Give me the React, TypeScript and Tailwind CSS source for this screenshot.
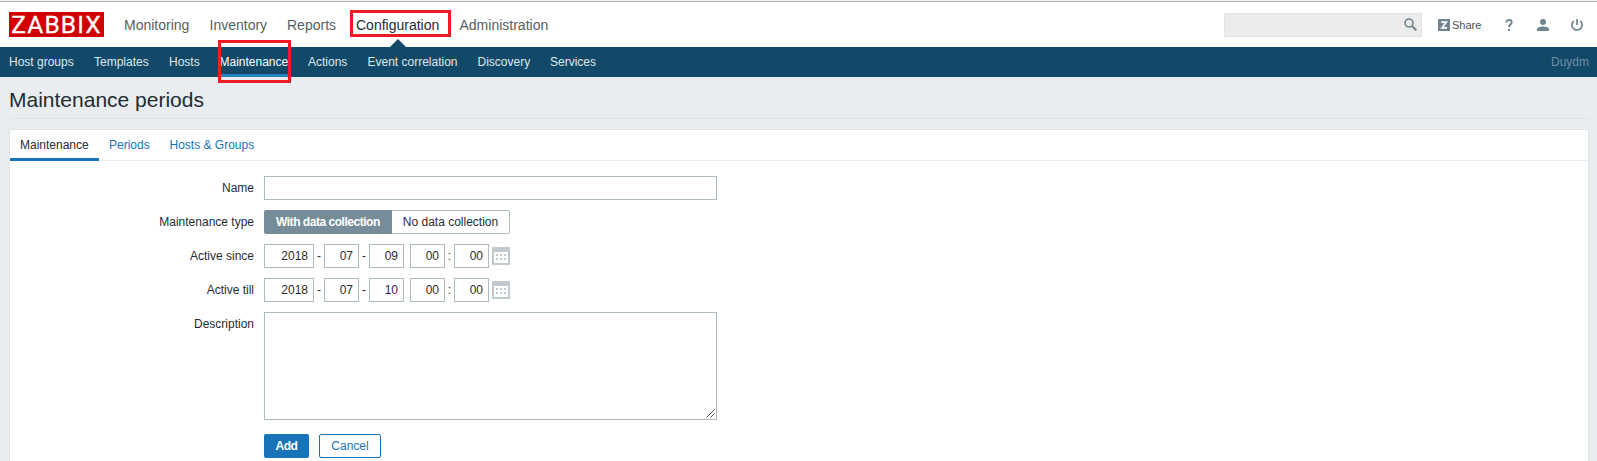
import React from "react";

const mainMenu = [
  { label: "Monitoring", w: "w-[85.5px]" },
  { label: "Inventory", w: "w-[77.5px]" },
  { label: "Reports", w: "w-[69px]" },
  { label: "Configuration", w: "w-[103.5px]", active: true },
  { label: "Administration", w: "w-[90px]" },
];

const subMenu = [
  { label: "Host groups", w: "w-[65px]" },
  { label: "Templates", w: "w-[55px]" },
  { label: "Hosts", w: "w-[31px]" },
  { label: "Maintenance", w: "w-[68px]", active: true },
  { label: "Actions", w: "w-[39.5px]" },
  { label: "Event correlation", w: "w-[90px]" },
  { label: "Discovery", w: "w-[52.5px]" },
  { label: "Services", w: "w-[46px]" },
];

function Logo() {
  return (
    <svg className="h-[25px] w-[95px] shrink-0 overflow-visible" viewBox="0 0 95 25">
      <rect width="95" height="25" fill="#d10000" />
      <text x="2.2" y="21.2" textLength="89.5" lengthAdjust="spacing" fill="#fff" stroke="#fff" strokeWidth=".3" fontFamily="Roboto, sans-serif" fontSize="24.5">
        ZABBIX
      </text>
    </svg>
  );
}

function CalendarIcon() {
  return (
    <svg className="h-[18px] w-[18px]" viewBox="0 0 18 18">
      <rect width="18" height="18" rx="1" fill="#c0c9ce" />
      <rect x="2" y="5" width="14" height="11" fill="#fff" />
      <g fill="#c0c9ce">
        {[4, 8, 12].map((x) => [7, 11].map((y) => <rect key={`${x}-${y}`} x={x} y={y} width="2" height="2" />))}
      </g>
    </svg>
  );
}

const box = "box-border flex h-6 items-center justify-end border border-[#acbbc2] bg-white pr-[5px]";

function DateRow({ label, day }: { label: string; day: string }) {
  return (
    <div className="flex h-6 items-center">
      <Label>{label}</Label>
      <div className={`${box} w-[50px]`}>2018</div>
      <span className="w-[10px] text-center">-</span>
      <div className={`${box} w-[35px]`}>07</div>
      <span className="w-[10px] text-center">-</span>
      <div className={`${box} w-[35px]`}>{day}</div>
      <div className={`${box} ml-[6px] w-[35px]`}>00</div>
      <span className="w-[9px] text-center">:</span>
      <div className={`${box} w-[35px]`}>00</div>
      <div className="ml-[3px]">
        <CalendarIcon />
      </div>
    </div>
  );
}

function Label({ children }: { children: React.ReactNode }) {
  return <div className="mr-[10px] w-[244px] shrink-0 text-right leading-6">{children}</div>;
}

export default function App() {
  return (
    <div className="flex h-[461px] w-[1597px] flex-col overflow-hidden bg-[#e9edf0] font-['Liberation_Sans',Arial,sans-serif] text-[12px] leading-[14px] text-[#1f2c33]">
      <div className="h-[2px] shrink-0 border-b border-[#b0b0b0] bg-[#f2f2f2]" />
      <header className="flex h-[45px] shrink-0 items-center bg-white pl-[9px]">
        <Logo />
        <nav className="ml-5 flex text-[14px] leading-4 text-[#545f66]">
          {mainMenu.map((m) => (
            <div key={m.label} className={`relative whitespace-nowrap ${m.w} ${m.active ? "text-[#1f2c33]" : ""}`}>
              {m.label}
              {m.active && (
                <>
                  <span className="absolute -top-[7px] -left-[6px] h-[27px] w-[101px] border-[3px] border-[#ed1c24]" />
                  <svg className="absolute top-[22px] left-[34px] h-2 w-4" viewBox="0 0 16 8">
                    <path d="M0 8 8 0l8 8z" fill="#124868" />
                  </svg>
                </>
              )}
            </div>
          ))}
        </nav>
        <div className="ml-auto flex items-center pr-[14px] text-[#708591]">
          <div className="flex h-6 w-[198px] items-center justify-end border border-[#dfe4e7] bg-[#ececec] pr-[4px]">
            <svg className="h-[13px] w-[13px]" viewBox="0 0 13 13" fill="none" stroke="currentColor">
              <circle cx="5" cy="5" r="4" strokeWidth="1.6" />
              <path d="m8 8 4.3 4.3" strokeWidth="2" />
            </svg>
          </div>
          <div className="ml-4 flex items-center">
            <svg className="h-3 w-3" viewBox="0 0 12 12">
              <rect width="12" height="12" fill="#708591" />
              <path d="M3.2 3.2h5L4 8.8h5" fill="none" stroke="#fff" strokeWidth="1.8" />
            </svg>
            <span className="ml-[2px] w-[29px] text-[11px] text-[#454f56]">Share</span>
          </div>
          <svg className="ml-[24px] h-3 w-2" viewBox="0 0 8 12" fill="none" stroke="currentColor" strokeWidth="1.9">
            <path d="M1.3 3.6C1.3 1.8 2.4 1 4 1s2.7.9 2.7 2.4C6.7 5.2 4 5.4 4 8.2M4 10v2" />
          </svg>
          <svg className="ml-[24px] h-3 w-3" viewBox="0 0 12 12" fill="currentColor">
            <circle cx="6" cy="3" r="3" />
            <path d="M0 12v-1.5C0 8.5 3 7.6 6 7.6s6 .9 6 2.9V12z" />
          </svg>
          <svg className="ml-[22px] h-3 w-3" viewBox="0 0 12 12" fill="none" stroke="currentColor" strokeWidth="1.7">
            <path d="M6 0v6M2.7 2a5.1 5.1 0 1 0 6.6 0" />
          </svg>
        </div>
      </header>
      <nav className="flex h-[30px] shrink-0 items-center gap-x-5 bg-[#124868] pr-2 pl-[9px] text-[#dde8ee]">
        {subMenu.map((m) => (
          <div key={m.label} className={`relative flex h-full items-center whitespace-nowrap ${m.w} ${m.active ? "border-b-[3px] border-[#2283c5] pt-[3px] text-white" : ""}`}>
            {m.active ? <span className="-ml-[0.5px]">{m.label}</span> : m.label}
            {m.active && <span className="absolute -top-[7px] -left-[2px] h-[43px] w-[73px] border-[3px] border-[#ed1c24]" />}
          </div>
        ))}
        <span className="ml-auto text-[#708fa3]">Duydm</span>
      </nav>
      <main className="flex grow flex-col pr-2 pl-[9px]">
        <h1 className="h-[42px] shrink-0 border-b border-[#dfe4e7] pt-[11px] text-[21px] leading-6">Maintenance periods</h1>
        <section className="mt-[10px] flex grow flex-col border border-b-0 border-[#dfe4e7] bg-white">
          <div className="flex h-[31px] shrink-0 border-b border-[#e9edf0]">
            <div className="h-[31px] w-[89px] shrink-0 border-b-[3px] border-[#1774b8] pt-2 pl-[10px]">Maintenance</div>
            <div className="ml-[10px] w-[60.5px] pt-2 text-[#1774b8]">Periods</div>
            <div className="pt-2 text-[#1774b8]">Hosts &amp; Groups</div>
          </div>
          <div className="flex flex-col gap-[10px] pt-[15px]">
            <div className="flex h-6">
              <Label>Name</Label>
              <div className="w-[453px] border border-[#acbbc2]" />
            </div>
            <div className="flex h-6">
              <Label>Maintenance type</Label>
              <div className="flex w-[128px] items-center justify-center rounded-l-[2px] bg-[#768d99] font-bold tracking-[-0.47px] text-white">
                <span className="w-[104px] whitespace-nowrap">With data collection</span>
              </div>
              <div className="flex w-[118px] items-center justify-center rounded-r-[2px] border border-l-0 border-[#acbbc2]">No data collection</div>
            </div>
            <DateRow label="Active since" day="09" />
            <DateRow label="Active till" day="10" />
            <div className="flex h-[108px]">
              <Label>Description</Label>
              <div className="flex w-[453px] items-end justify-end border border-[#acbbc2] p-px">
                <svg className="h-[9px] w-[9px]" viewBox="0 0 9 9" stroke="#555" fill="none">
                  <path d="M.5 8.5l8-8M4.5 8.5l4-4" />
                </svg>
              </div>
            </div>
            <div className="mt-1 flex h-6 pl-[254px]">
              <div className="flex w-[45px] items-center justify-center rounded-[2px] bg-[#1774b8] font-bold tracking-[-0.5px] text-white">Add</div>
              <div className="ml-[10px] flex w-[62px] items-center justify-center rounded-[2px] border border-[#1774b8] text-[#1774b8]">Cancel</div>
            </div>
          </div>
        </section>
      </main>
    </div>
  );
}
